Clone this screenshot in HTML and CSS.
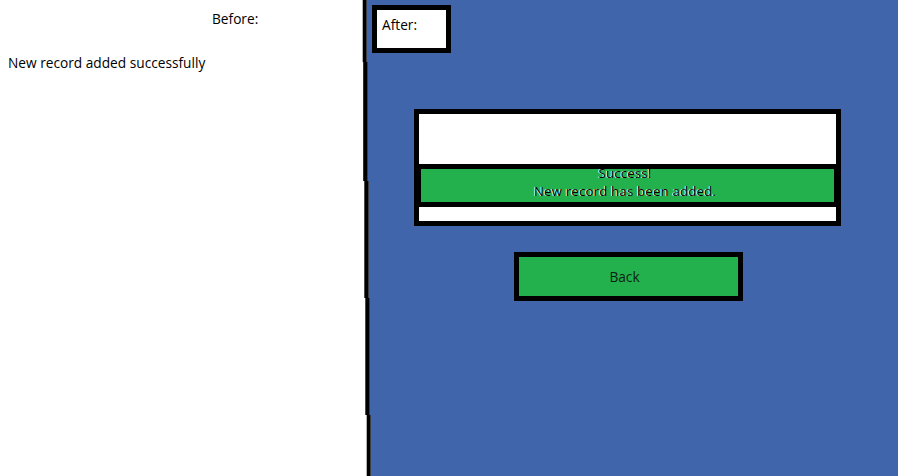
FILE: index.html
```html
<!DOCTYPE html>
<html lang="en">
<head>
<meta charset="utf-8">
<title>Before / After</title>
<link rel="stylesheet" href="styles.css">
</head>
<body>
<div class="page">
  <section class="before">
    <div class="before-title">Before:</div>
    <div class="before-msg">New record added successfully</div>
  </section>
  <svg class="divider" width="10" height="476" viewBox="0 0 10 476" aria-hidden="true">
    <polygon fill="#4165aa" points="5.7,0 10,0 10,476 9.7,476 9.7,415 8.7,415 8.7,298 7.7,298 7.7,181 6.7,181 6.7,62 5.7,62"/>
    <rect x="1.7" y="0" width="4" height="62" fill="#000"/>
    <rect x="2.2" y="62" width="4.5" height="119" fill="#000"/>
    <rect x="3.3" y="181" width="4.4" height="117" fill="#000"/>
    <rect x="4.3" y="298" width="4.4" height="117" fill="#000"/>
    <rect x="5.7" y="415" width="4" height="61" fill="#000"/>
  </svg>
  <section class="after">
    <div class="after-label">After:</div>
    <div class="card">
      <div class="card-top"></div>
      <div class="card-alert">
        <div class="alert-line">Success!</div>
        <div class="alert-line">New record has been added.</div>
      </div>
      <div class="card-bottom"></div>
    </div>
    <div class="back-btn">Back</div>
  </section>
</div>
</body>
</html>
```

FILE: styles.css
```css
html, body {
  margin: 0;
  padding: 0;
  background: #fff;
}
body {
  font-family: "Open Sans", "DejaVu Sans", sans-serif;
  font-size: 13.7px;
  color: #000;
}
.page {
  display: flex;
  width: 898px;
  height: 476px;
  overflow: hidden;
}
.before {
  width: 361px;
  flex: none;
  background: #fff;
  display: flex;
  flex-direction: column;
}
.before-title {
  margin-left: 212px;
  margin-top: 10px;
  line-height: 18px;
}
.before-msg {
  margin-left: 8px;
  margin-top: 26px;
  line-height: 18px;
}
.divider {
  display: block;
  flex: none;
}
.after {
  flex: 1;
  background: #4165aa;
  display: flex;
  flex-direction: column;
  align-items: flex-start;
}
.after-label {
  margin-left: 1px;
  margin-top: 5px;
  width: 64px;
  height: 32px;
  padding: 6px 0 0 5px;
  border: 5px solid #000;
  background: #fff;
  line-height: 18px;
}
.card {
  margin-left: 43px;
  margin-top: 56px;
  width: 417px;
  padding: 5px;
  background: #000;
  display: flex;
  flex-direction: column;
  gap: 5px;
}
.card-top {
  height: 50px;
  background: #fff;
}
.card-alert {
  height: 33px;
  margin: 0 2px;
  padding-right: 5px;
  background: #22b14c;
  display: flex;
  flex-direction: column;
  align-items: center;
  justify-content: flex-start;
  font-size: 13px;
  letter-spacing: 0.3px;
  line-height: 17.8px;
  color: #000;
  text-shadow: -1px 0 0 #fff;
}
.alert-line:first-child {
  margin-top: -4px;
}
.card-bottom {
  height: 14px;
  background: #fff;
}
.back-btn {
  margin-left: 143px;
  margin-top: 26px;
  width: 211px;
  height: 39px;
  padding-right: 8px;
  border: 5px solid #000;
  background: #22b14c;
  display: flex;
  align-items: center;
  justify-content: center;
  color: #0d1f10;
}
```
